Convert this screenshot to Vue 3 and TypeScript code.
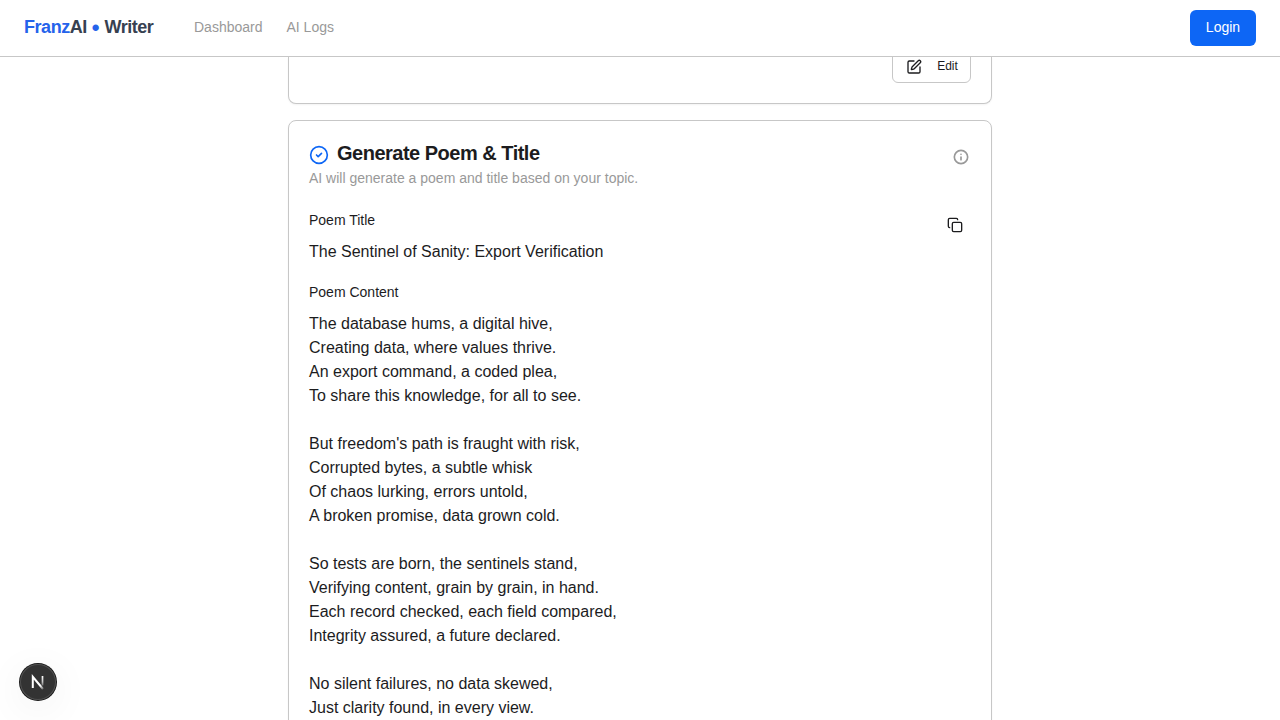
<script setup lang="ts">
const navigation: string[] = ['Dashboard', 'AI Logs']

const poemTitle = 'The Sentinel of Sanity: Export Verification'

const stanzas: string[][] = [
  [
    'The database hums, a digital hive,',
    'Creating data, where values thrive.',
    'An export command, a coded plea,',
    'To share this knowledge, for all to see.',
  ],
  [
    "But freedom's path is fraught with risk,",
    'Corrupted bytes, a subtle whisk',
    'Of chaos lurking, errors untold,',
    'A broken promise, data grown cold.',
  ],
  [
    'So tests are born, the sentinels stand,',
    'Verifying content, grain by grain, in hand.',
    'Each record checked, each field compared,',
    'Integrity assured, a future declared.',
  ],
  ['No silent failures, no data skewed,', 'Just clarity found, in every view.'],
]
</script>

<template>
  <div class="page">
    <header class="topbar">
      <a class="brand"><span class="brand-accent">Franz</span>AI <span class="brand-accent brand-dot">•</span> Writer</a>
      <nav class="nav">
        <a v-for="item in navigation" :key="item">{{ item }}</a>
      </nav>
      <button class="login">Login</button>
    </header>

    <main class="content">
      <section class="card card-previous">
        <button class="edit">
          <svg class="icon" width="16" height="16" viewBox="0 0 24 24">
            <path d="M12 3H5a2 2 0 0 0-2 2v14a2 2 0 0 0 2 2h14a2 2 0 0 0 2-2v-7" />
            <path d="M18.375 2.625a1 1 0 0 1 3 3l-9.013 9.014a2 2 0 0 1-.853.505l-2.873.84a.5.5 0 0 1-.62-.62l.84-2.873a2 2 0 0 1 .506-.852z" />
          </svg>
          <span>Edit</span>
        </button>
      </section>

      <section class="card card-stage">
        <div class="stage-head">
          <div>
            <h2 class="stage-title">
              <svg class="icon check" width="20" height="20" viewBox="0 0 24 24">
                <circle cx="12" cy="12" r="10" />
                <path d="m9 12 2 2 4-4" />
              </svg>
              <span>Generate Poem &amp; Title</span>
            </h2>
            <p class="stage-description">AI will generate a poem and title based on your topic.</p>
          </div>
          <svg class="icon info" width="16" height="16" viewBox="0 0 24 24">
            <circle cx="12" cy="12" r="10" />
            <path d="M12 16v-4M12 8h.01" />
          </svg>
        </div>

        <div class="output">
          <div class="fields">
            <h3 class="label">Poem Title</h3>
            <p class="value">{{ poemTitle }}</p>
            <h3 class="label">Poem Content</h3>
            <div v-for="(stanza, index) in stanzas" :key="index" class="stanza">
              <p v-for="line in stanza" :key="line">{{ line }}</p>
            </div>
          </div>
          <svg class="icon copy" width="16" height="16" viewBox="0 0 24 24">
            <rect x="8" y="8" width="14" height="14" rx="2" />
            <path d="M4 16c-1.1 0-2-.9-2-2V4c0-1.1.9-2 2-2h10c1.1 0 2 .9 2 2" />
          </svg>
        </div>
      </section>
    </main>

    <div class="dev-badge">
      <svg width="36" height="36" viewBox="0 0 36 36">
        <defs>
          <linearGradient id="stem-fade" x1="0" y1="12" x2="0" y2="24" gradientUnits="userSpaceOnUse">
            <stop offset="0" stop-color="#fff" />
            <stop offset="0.5" stop-color="#fff" stop-opacity="0.7" />
            <stop offset="1" stop-color="#fff" stop-opacity="0" />
          </linearGradient>
          <linearGradient id="diagonal-fade" x1="18" y1="18" x2="24" y2="25" gradientUnits="userSpaceOnUse">
            <stop offset="0" stop-color="#fff" />
            <stop offset="0.45" stop-color="#fff" />
            <stop offset="1" stop-color="#fff" stop-opacity="0.2" />
          </linearGradient>
        </defs>
        <path d="M12.8 24V12.8L23 25" fill="none" stroke="url(#diagonal-fade)" stroke-width="2" />
        <path d="M22.5 12v9.5" fill="none" stroke="url(#stem-fade)" stroke-width="1.7" />
      </svg>
    </div>
  </div>
</template>

<style>
body {
  margin: 0;
  overflow: hidden;
}
</style>

<style scoped>
.page {
  height: 720px;
  overflow: hidden;
  display: flex;
  flex-direction: column;
  background: #fff;
  color: #1c1c1e;
  font-family: "Liberation Sans", Arial, sans-serif;
}

h2, h3, p {
  margin: 0;
  font-weight: 400;
}

button {
  font-family: inherit;
}

.topbar {
  box-sizing: border-box;
  flex: none;
  height: 57px;
  padding: 0 24px;
  display: flex;
  align-items: center;
  border-bottom: 1px solid #c7c7c7;
}

.brand {
  width: 130px;
  margin-right: 40px;
  padding-bottom: 2px;
  white-space: nowrap;
  font-size: 18px;
  line-height: 28px;
  font-weight: 700;
  letter-spacing: -0.45px;
  color: #374151;
}

.brand-accent {
  color: #2563eb;
}

.brand-dot {
  margin: 0 0.8px 0 0.4px;
  font-size: 22px;
  line-height: 0;
  vertical-align: -2px;
}

.nav {
  display: flex;
  gap: 24px;
  padding-bottom: 2px;
  font-size: 14px;
  line-height: 20px;
  color: #999;
}

.login {
  height: 36px;
  width: 66px;
  margin-left: auto;
  padding: 0 0 2px;
  border: 0;
  border-radius: 6px;
  background: #0d66f5;
  color: #fff;
  font-size: 14px;
}

.content {
  flex: 1;
  min-height: 0;
  overflow: hidden;
  width: 712px;
  margin: 0 auto;
  display: flex;
  flex-direction: column;
  align-items: center;
  gap: 16px;
}

.card {
  box-sizing: border-box;
  width: 704px;
  flex: none;
  border: 1px solid #c7c7c7;
  border-radius: 8px;
  padding: 20px;
  background: #fff;
  box-shadow: 0 1px 2px rgba(0, 0, 0, 0.05);
}

.card-previous {
  height: 47px;
  border-top: 0;
  border-radius: 0 0 8px 8px;
  padding: 0 20px 20px;
  display: flex;
  justify-content: flex-end;
  align-items: flex-end;
}

.edit {
  box-sizing: border-box;
  width: 79px;
  height: 32px;
  flex: none;
  padding: 0 12px 0 12.6px;
  display: flex;
  align-items: center;
  gap: 15.6px;
  border: 1px solid #c7c7c7;
  border-radius: 6px;
  background: #fff;
  color: #1c1c1e;
  font-size: 12px;
  line-height: 16px;
}

.edit span {
  padding-bottom: 2px;
}

.icon {
  flex: none;
  display: block;
  fill: none;
  stroke: currentColor;
  stroke-width: 2;
  stroke-linecap: round;
  stroke-linejoin: round;
}

.stage-head {
  display: flex;
  justify-content: space-between;
}

.stage-title {
  display: flex;
  align-items: center;
  gap: 8px;
  height: 28px;
  font-size: 20px;
  line-height: 24px;
  font-weight: 700;
  letter-spacing: -0.5px;
}

.stage-title span {
  padding-bottom: 4px;
}

.check {
  color: #0d66f5;
}

.stage-description {
  margin: -1px 0 1px;
  font-size: 14px;
  line-height: 20px;
  color: #999;
}

.info {
  margin: 8px 2px 0 0;
  color: #999;
  stroke-width: 2.5;
}

.output {
  display: flex;
  justify-content: space-between;
  margin-top: 21px;
}

.label {
  font-size: 14px;
  line-height: 20px;
}

.value {
  margin: 10px 0 18px;
  font-size: 16px;
  line-height: 24px;
}

.label:nth-of-type(2) {
  margin-bottom: 10px;
}

.stanza {
  font-size: 16px;
  line-height: 24px;
  margin-bottom: 24px;
}

.copy {
  margin: 7px 8px 0 0;
}

.dev-badge {
  position: fixed;
  left: 20px;
  bottom: 20px;
  width: 36px;
  height: 36px;
  border-radius: 50%;
  background: #333;
  box-shadow:
    0 0 0 1px #171717,
    inset 0 0 0 1px #505050,
    0 8px 40px rgba(0, 0, 0, 0.07);
}

.dev-badge svg {
  display: block;
}
</style>
